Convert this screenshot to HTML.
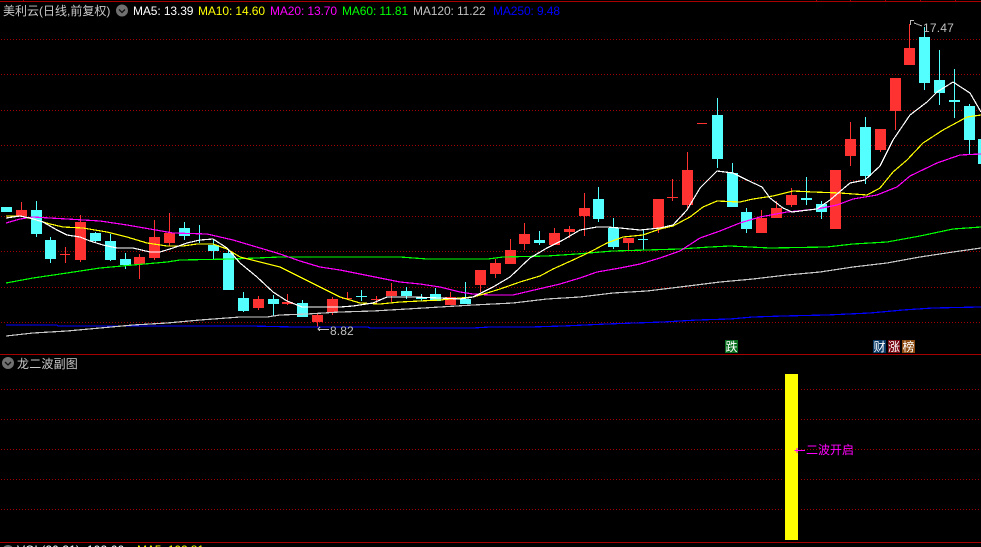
<!DOCTYPE html>
<html><head><meta charset="utf-8"><style>
html,body{margin:0;padding:0;background:#000;}
#c{position:relative;width:981px;height:547px;overflow:hidden;background:#000;font-family:"Liberation Sans","WenQuanYi Zen Hei",sans-serif;}
.t{position:absolute;white-space:nowrap;font-size:12px;line-height:14px;letter-spacing:-.1px;}
.z{font-family:"Liberation Sans","WenQuanYi Zen Hei","Noto Sans CJK SC",sans-serif;font-size:12px;letter-spacing:0;color:#c8c8c8;}
.b{position:absolute;top:340px;height:13px;color:#fff;font:12px/13px "WenQuanYi Zen Hei","Noto Sans CJK SC",sans-serif;text-align:center;overflow:hidden;}
</style></head><body><div id="c">
<svg width="981" height="547" style="position:absolute;left:0;top:0" shape-rendering="crispEdges" fill="none">
<g stroke="#a00000" stroke-dasharray="1 2">
<path d="M1 39.5H981M1 74.5H981M1 110.5H981M1 145.5H981M1 180.5H981M1 216.5H981M1 251.5H981M1 287.5H981M1 322.5H981"/>
<path d="M1 389.5H782M801 389.5H981M1 419.5H782M801 419.5H981M1 449.5H782M801 449.5H981M1 479.5H782M801 479.5H981M1 509.5H782M801 509.5H981"/>
</g>
<path d="M0 1.5H981M0 354.5H981M0 542.5H981" stroke="#a80000"/>
<path d="M23.5 0V1M816.5 0V1M850.5 0V1M885.5 0V1M920.5 0V1M955.5 0V1" stroke="#a80000"/>
<rect x="785" y="374" width="13" height="166" fill="#ff0"/>

<g stroke="#ff3232">
<path d="M21.5 202V217M65.5 247V263M60 254.5H70M80.5 215V262M139.5 254V279M154.5 220V260M169.5 213V246M258.5 296V310M287.5 294V305M317.5 313V327M332.5 297V315M347.5 292V300M342 298.5H352M376.5 296V303M371 299.5H382M391.5 283V302M450.5 292V305M480.5 270V292M495.5 259V278M510.5 239V264M524.5 223V250M554.5 228V245M569.5 226V238M584.5 193V236M628.5 238V250M658.5 199V233M672.5 179V201M667 197.5H678M687.5 152V210M697 123.5H707M761.5 210V233M776.5 201V218M791.5 188V207M850.5 122V166M880.5 129V152M895.5 78V130M909.5 24V65"/>
</g>
<g fill="#ff3232">
<rect x="16" y="210" width="11" height="6"/><rect x="75" y="222" width="11" height="38"/><rect x="134" y="257" width="11" height="7"/><rect x="149" y="237" width="11" height="21"/><rect x="164" y="233" width="11" height="10"/><rect x="253" y="299" width="11" height="9"/><rect x="282" y="302" width="11" height="2"/><rect x="312" y="315" width="11" height="7"/><rect x="327" y="299" width="11" height="13"/><rect x="386" y="291" width="11" height="5"/><rect x="445" y="297" width="11" height="8"/><rect x="475" y="270" width="11" height="15"/><rect x="490" y="263" width="11" height="11"/><rect x="505" y="250" width="11" height="14"/><rect x="519" y="234" width="11" height="10"/><rect x="549" y="233" width="11" height="12"/><rect x="564" y="229" width="11" height="3"/><rect x="579" y="208" width="11" height="8"/><rect x="623" y="238" width="11" height="5"/><rect x="653" y="199" width="11" height="29"/><rect x="682" y="170" width="11" height="35"/><rect x="756" y="218" width="11" height="15"/><rect x="771" y="208" width="11" height="10"/><rect x="786" y="195" width="11" height="10"/><rect x="830" y="170" width="11" height="59"/><rect x="845" y="139" width="11" height="17"/><rect x="875" y="129" width="11" height="21"/><rect x="890" y="78" width="11" height="33"/><rect x="904" y="48" width="11" height="17"/>
</g>
<g stroke="#54ffff">
<path d="M36.5 201V237M50.5 237V263M95.5 232V243M110.5 234V261M125.5 253V269M184.5 222V240M199.5 225V243M213.5 240V260M228.5 250V290M243.5 292V312M273.5 295V316M302.5 300V317M361.5 290V301M356 296.5H367M406.5 287V299M421.5 294V301M416 297.5H427M435.5 288V301M465.5 282V304M539.5 231V245M598.5 187V222M613.5 218V249M643.5 230V250M638 239.5H648M717.5 98V168M732.5 163V207M746.5 208V233M806.5 177V205M801 198.5H812M821.5 201V219M865.5 117V184M924.5 27V90M939.5 50V105M954.5 69V118M969.5 104V154"/>
</g>
<g fill="#54ffff">
<rect x="1" y="207" width="11" height="5"/><rect x="31" y="210" width="11" height="24"/><rect x="45" y="240" width="11" height="19"/><rect x="90" y="233" width="11" height="8"/><rect x="105" y="241" width="11" height="19"/><rect x="120" y="259" width="11" height="6"/><rect x="179" y="228" width="11" height="8"/><rect x="208" y="245" width="11" height="6"/><rect x="223" y="253" width="11" height="37"/><rect x="238" y="298" width="11" height="13"/><rect x="268" y="299" width="11" height="5"/><rect x="297" y="303" width="11" height="14"/><rect x="401" y="291" width="11" height="5"/><rect x="416" y="297" width="11" height="2"/><rect x="430" y="294" width="11" height="7"/><rect x="460" y="299" width="11" height="5"/><rect x="534" y="240" width="11" height="3"/><rect x="593" y="199" width="11" height="20"/><rect x="608" y="228" width="11" height="19"/><rect x="712" y="115" width="11" height="44"/><rect x="727" y="173" width="11" height="34"/><rect x="741" y="212" width="11" height="17"/><rect x="801" y="198" width="11" height="2"/><rect x="816" y="204" width="11" height="8"/><rect x="860" y="127" width="11" height="49"/><rect x="919" y="37" width="11" height="46"/><rect x="934" y="80" width="11" height="13"/><rect x="949" y="100" width="11" height="2"/><rect x="964" y="106" width="11" height="34"/><rect x="978" y="139" width="3" height="25"/>
</g>

<polyline stroke="#0000ff" stroke-width="1.2" points="6,325 57,325 58,326 250,326 295,327 368,327 370,328 473,328 490,327 530,327 563,326 607,324 663,322 697,320 730,319 753,317 783,316 827,315 870,313 903,310 933,308 981,307"/>
<polyline stroke="#c8c8c8" stroke-width="1.2" points="6,336 33,333 67,331 100,328 133,325 167,323 200,320 240,317 267,317 280,315 307,314 340,312 373,311 407,309 440,307 473,305 513,303 547,299 580,297 613,293 647,291 680,287 720,282 753,279 787,275 820,272 853,267 887,263 920,257 953,252 981,248"/>
<polyline stroke="#00ff00" stroke-width="1.2" points="6,283 33,278 67,273 100,268 133,265 167,262 180,260 233,259 280,257 400,257 427,259 488,259 503,257 547,256 577,254 613,251 680,249 710,247 730,246 770,248 827,247 853,244 887,242 920,236 953,229 981,227"/>
<polyline stroke="#ff00ff" stroke-width="1.2" points="6,223 20,219 33,217 67,219 100,221 127,225 150,229 173,233 207,234 233,240 260,248 280,254 300,261 320,267 340,270 360,274 380,278 400,282 420,284 440,287 460,292 473,294 490,295 513,295 530,291 560,284 580,278 597,272 620,268 640,264 660,258 680,251 700,238 720,231 740,223 760,217 787,212 817,209 837,205 853,199 877,195 897,187 910,176 937,163 960,155 981,154"/>
<polyline stroke="#ffff00" stroke-width="1.2" points="6,216 20,216 33,219 50,224 63,227 83,228 107,232 127,237 147,243 167,246 183,246 197,244 213,244 227,249 240,257 260,262 280,267 300,277 320,287 340,297 360,303 380,304 400,302 420,301 440,300 460,298 473,297 487,293 500,289 520,282 540,276 553,269 573,260 590,252 607,243 623,237 643,235 660,229 673,226 690,217 703,207 717,201 740,202 753,199 773,196 793,191 813,192 840,193 867,195 880,188 893,172 907,160 923,143 943,130 967,117 981,115"/>
<polyline stroke="#ffffff" stroke-width="1.2" points="6,218 20,216 30,218 43,222 57,230 67,235 80,237 90,241 103,245 117,248 133,248 150,252 160,252 173,248 187,243 200,240 213,239 227,248 240,263 257,277 273,292 287,301 302,307 340,307 353,306 373,303 387,297 400,297 413,297 440,298 460,299 473,297 493,287 510,277 530,258 547,248 563,240 580,230 597,227 607,227 620,228 640,230 660,228 673,225 687,210 700,188 717,171 733,173 747,180 762,187 770,198 783,208 792,212 817,209 830,200 850,183 865,180 880,166 893,140 910,115 927,102 937,92 953,82 970,93 981,112"/>

<path d="M910.5 20V25M910 20.5H914M914 23L922 26" stroke="#c0c0c0"/>
<path d="M318 329.5H329M320 327L318 329L320 331" stroke="#c0c0c0"/>
<path d="M795 450.5H805M795 450V451M797 448V453" stroke="#ff00ff"/>
</svg>

<div class="t z" style="left:3px;top:4px">美利云(日线,前复权)</div>
<svg width="14" height="14" style="position:absolute;left:115px;top:3px"><circle cx="7" cy="7.5" r="6" fill="#707070"/><path d="M4 6.5L7 9.5L10 6.5" stroke="#111" stroke-width="1.3" fill="none"/></svg>
<div class="t" style="left:133px;top:4px;color:#fff">MA5: 13.39</div>
<div class="t" style="left:198px;top:4px;color:#ff0">MA10: 14.60</div>
<div class="t" style="left:270px;top:4px;color:#f0f">MA20: 13.70</div>
<div class="t" style="left:342px;top:4px;color:#0f0">MA60: 11.81</div>
<div class="t" style="left:413px;top:4px;color:#c0c0c0">MA120: 11.22</div>
<div class="t" style="left:493px;top:4px;color:#0000ff">MA250: 9.48</div>

<div class="t" style="left:923px;top:21px;color:#c0c0c0;letter-spacing:.2px">17.47</div>
<div class="t" style="left:330px;top:324px;color:#c0c0c0;letter-spacing:.1px">8.82</div>

<div class="b" style="left:725px;width:13px;background:#0a7020">跌</div>
<div class="b" style="left:873px;width:13px;background:#0a3a68">财</div>
<div class="b" style="left:888px;width:12px;background:#7a0a14">涨</div>
<div class="b" style="left:902px;width:13px;background:#8a4a10">榜</div>

<svg width="14" height="14" style="position:absolute;left:1px;top:356px"><circle cx="7" cy="7" r="6" fill="#707070"/><path d="M4 6L7 9L10 6" stroke="#111" stroke-width="1.3" fill="none"/></svg>
<div class="t z" style="left:17px;top:357px;letter-spacing:.2px">龙二波副图</div>
<div class="t z" style="left:806px;top:443px;color:#f0f;letter-spacing:0">二波开启</div>

<svg width="14" height="14" style="position:absolute;left:1px;top:544px"><circle cx="7" cy="7" r="6" fill="#707070"/></svg>
<div class="t" style="left:17px;top:543px;color:#fff;letter-spacing:.1px">VOL(20.31): 102.66</div>
<div class="t" style="left:137px;top:543px;color:#ff0">MA5: 102.81</div>
</div></body></html>
